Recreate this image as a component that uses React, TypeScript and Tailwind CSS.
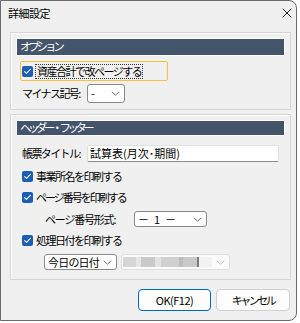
import React from "react";

const Check = () => (
  <span className="w-[11px] h-[11px] rounded-[2px] bg-[#1a5fb4] flex items-center justify-center shrink-0">
    <svg width="9" height="9" viewBox="0 0 9 9" fill="none">
      <path d="M1.6 4.6 L3.5 6.4 L7.4 2.4" stroke="#fff" strokeWidth="1.1" strokeLinecap="round" strokeLinejoin="round" />
    </svg>
  </span>
);

const Chevron = ({ light }: { light?: boolean }) => (
  <svg width="9" height="5" viewBox="0 0 9 5" fill="none" className="shrink-0">
    <path d="M0.8 0.8 L4.5 4.2 L8.2 0.8" stroke={light ? "#b8b8b8" : "#5c5c5c"} strokeWidth="0.9" />
  </svg>
);

const Header = ({ title, h, track }: { title: string; h: string; track: string }) => (
  <div className={`${h} bg-[#44546a] border border-white flex items-center pl-[3px] text-white text-[11.5px] leading-none`}>
    <span className={track}>{title}</span>
  </div>
);

const CheckRow = ({ label, className, track }: { label: string; className: string; track: string }) => (
  <div className={`${className} h-[16px] flex items-center ml-[6px] gap-[3px] text-[11px] text-black`}>
    <Check />
    <span className={`leading-none whitespace-nowrap ${track}`}>{label}</span>
  </div>
);

export default function App() {
  return (
    <div className="w-[300px] h-[323px] bg-white font-['Noto_Sans_CJK_JP','Noto_Sans',sans-serif]">
      <div className="w-[297px] h-[321px] bg-[#f0f0f0] border border-[#6a6a6a] rounded-tr-[8px] rounded-br-[8px] flex flex-col">
        {/* title bar */}
        <div className="h-[24px] flex items-center justify-between pl-[7px] pr-[4px]">
          <span className="text-[11px] text-black leading-none tracking-[-0.5px]">詳細設定</span>
          <svg width="10" height="10" viewBox="0 0 10 10" fill="none">
            <path d="M0.7 0.7 L9.3 9.3 M9.3 0.7 L0.7 9.3" stroke="#222" strokeWidth="1" />
          </svg>
        </div>

        <div className="flex flex-col pl-[9px] pr-[5px] pt-[7px]">
          {/* オプション */}
          <div className="w-[281px] border border-[#d5d5d5] shadow-[inset_1px_1px_0_#fff] px-[5px] pt-[5px] pb-[6px] flex flex-col">
            <Header title="オプション" h="h-[18px]" track="tracking-[-3.2px]" />
            <div className="mt-[5px] ml-[4px] w-[148px] h-[20px] border border-[#f7c136] rounded-[2px] flex items-center pl-[1px] gap-[2px]">
              <Check />
              <span className="border border-dotted border-[#333] h-[15px] px-[1px] flex items-center text-[11px] leading-none text-black whitespace-nowrap tracking-[-1.5px]">
                資産合計で改ページする
              </span>
            </div>
            <div className="mt-[3px] flex items-center h-[19px] ml-[6px]">
              <span className="w-[65px] text-[11px] leading-none text-black whitespace-nowrap tracking-[-1.6px]">マイナス記号:</span>
              <div className="w-[38px] h-[19px] bg-white border border-[#8a8a8a] rounded-[3px] flex items-center justify-between pl-[3px] pr-[4px]">
                <span className="text-[11px] leading-none">-</span>
                <Chevron />
              </div>
            </div>
          </div>

          {/* ヘッダー・フッター */}
          <div className="mt-[4px] w-[281px] border border-[#d5d5d5] shadow-[inset_1px_1px_0_#fff] px-[5px] pt-[5px] pb-[9px] flex flex-col">
            <Header title="ヘッダー・フッター" h="h-[16px]" track="tracking-[-3.6px]" />
            <div className="mt-[9px] flex items-center h-[17px] ml-[6px]">
              <span className="w-[65px] text-[11px] leading-none text-black whitespace-nowrap tracking-[-1.6px]">帳票タイトル:</span>
              <div className="w-[192px] h-[17px] bg-white border border-[#e0e0e0] border-b-[#8a8a8a] rounded-[2px] flex items-center pl-[2px] text-[11px] leading-none">
                試算表(月次･期間)
              </div>
            </div>
            <CheckRow className="mt-[6px]" label="事業所名を印刷する" track="tracking-[-1.5px]" />
            <CheckRow className="mt-[5px]" label="ページ番号を印刷する" track="tracking-[-2px]" />
            <div className="mt-[6px] flex items-center h-[16px] ml-[29px]">
              <span className="w-[89px] text-[11px] leading-none text-black whitespace-nowrap tracking-[-1.2px]">ページ番号形式:</span>
              <div className="w-[73px] h-[16px] bg-white border border-[#8a8a8a] rounded-[3px] flex items-center justify-between pl-[3px] pr-[4px]">
                <span className="text-[11px] leading-none whitespace-pre">－  1  －</span>
                <Chevron />
              </div>
            </div>
            <CheckRow className="mt-[5px]" label="処理日付を印刷する" track="tracking-[-1.5px]" />
            <div className="mt-[6px] flex items-center ml-[28px] gap-[4px]">
              <div className="w-[73px] h-[16px] bg-white border border-[#8a8a8a] rounded-[3px] flex items-center justify-between pl-[3px] pr-[4px]">
                <span className="text-[11px] leading-none tracking-[-0.8px]">今日の日付</span>
                <Chevron />
              </div>
              <div className="w-[109px] h-[16px] bg-[#fbfbfb] border border-[#dedede] rounded-[3px] flex items-center justify-between pl-[1px] pr-[4px]">
                <div className="flex h-[10px]">
                  <span className="w-[13px] bg-[#d6d6d6]" />
                  <span className="w-[5px] bg-[#e6e6e6]" />
                  <span className="w-[14px] bg-[#cacaca]" />
                  <span className="w-[6px] bg-[#e2e2e2]" />
                  <span className="w-[18px] bg-[#d0d0d0]" />
                  <span className="w-[4px] bg-[#bdbdbd]" />
                  <span className="w-[14px] bg-[#c9c9c9]" />
                  <span className="w-[2px] bg-[#7c7c7c]" />
                  <span className="w-[13px] bg-[#f2f2f2]" />
                </div>
                <Chevron light />
              </div>
            </div>
          </div>

          {/* buttons */}
          <div className="mt-[9px] flex justify-end gap-[5px] pr-[1px]">
            <button className="w-[73px] h-[22px] bg-[#fdfdfd] border border-[#0067c0] rounded-[4px] text-[11px] leading-none text-black tracking-[-0.5px]">
              OK(F12)
            </button>
            <button className="w-[74px] h-[22px] bg-[#fdfdfd] border border-[#d0d0d0] rounded-[4px] text-[11px] leading-none text-black tracking-[-2.5px]">
              キャンセル
            </button>
          </div>
        </div>
      </div>
    </div>
  );
}
